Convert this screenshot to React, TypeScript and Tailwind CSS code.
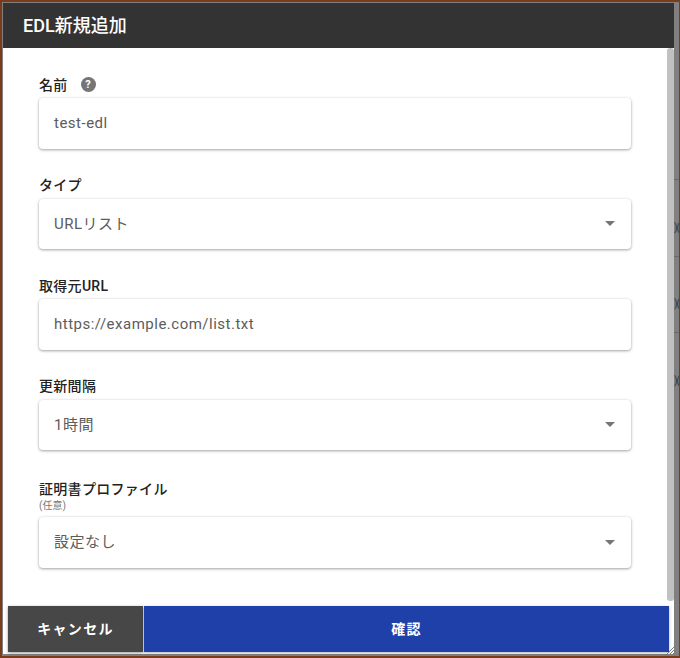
const FONT = "font-['Roboto','Noto_Sans_CJK_JP',sans-serif]";

function Box({ value, select }: { value: string; select?: boolean }) {
	return (
		<div className="flex h-[50.5px] items-center justify-between rounded bg-white pl-[15px] pr-[16px] text-[15px] tracking-[0.5px] text-[#5c5c5c] shadow-[0_1px_3px_rgba(0,0,0,0.35),0_0_3px_rgba(0,0,0,0.06)]">
			<span>{value}</span>
			{select && (
				<span className="h-0 w-0 border-x-[5px] border-t-[5px] border-x-transparent border-t-[#757575]" />
			)}
		</div>
	);
}

function Field({
	label,
	value,
	select,
	help,
	note,
}: {
	label: string;
	value: string;
	select?: boolean;
	help?: boolean;
	note?: string;
}) {
	return (
		<div className={note ? "mt-[2.5px] flex flex-col" : "flex flex-col"}>
			<div className="flex h-[21px] items-center gap-[13px] text-[14px] font-medium leading-none tracking-[0.3px] text-[#222]">
				{label}
				{help && (
					<span className="flex h-[15px] w-[15px] items-center justify-center rounded-full bg-[#757575] text-[11px] font-bold text-white">
						?
					</span>
				)}
			</div>
			{note ? (
				<div className="mb-[5.5px] text-[10px] leading-[12px] text-[#777]">{note}</div>
			) : (
				<div className="h-[3px]" />
			)}
			<Box value={value} select={select} />
		</div>
	);
}

export default function App() {
	return (
		<div className={`${FONT} relative flex h-[658px] w-[680px] flex-col overflow-hidden border-t-2 border-l-2 border-r border-b-2 border-[#7a3a1c] bg-[#808080] pt-px pl-px pr-[5px]`}>
			{/* page behind the modal, only a sliver shows on the right */}
			<div className="absolute top-[177px] right-0 h-px w-[5px] bg-[#6a6a6a]" />
			<div className="absolute top-[254px] right-0 h-px w-[5px] bg-[#6a6a6a]" />
			<div className="absolute top-[330px] right-0 h-px w-[5px] bg-[#6a6a6a]" />
			<span className="absolute top-[220px] right-0 text-[10px] leading-[12px] tracking-[-1px] text-[#333]">)(</span>
			<span className="absolute top-[296px] right-0 text-[10px] leading-[12px] tracking-[-1px] text-[#333]">)(</span>
			<span className="absolute top-[373px] right-0 text-[10px] leading-[12px] tracking-[-1px] text-[#333]">)(</span>

			<div className="relative flex h-[651px] flex-col bg-white">
				<div className="flex h-[45px] shrink-0 items-center bg-[#333333] pl-[20px] text-[18px] font-medium text-white">
					EDL新規追加
				</div>
				<div className="flex min-h-0 flex-1">
					<div className="flex min-w-0 flex-1 flex-col gap-[26px] pl-[36px] pr-[36px] pt-[26px]">
						<Field label="名前" value="test-edl" help />
						<Field label="タイプ" value="URLリスト" select />
						<Field label="取得元URL" value="https://example.com/list.txt" />
						<Field label="更新間隔" value="1時間" select />
						<Field label="証明書プロファイル" value="設定なし" select note="(任意)" />
					</div>
					<div className="mb-[5px] w-[7px] shrink-0 rounded-[3px] bg-[#c1c1c1]" />
				</div>
				<div className="mb-[2px] flex h-[46px] shrink-0 gap-px px-[5px] text-[14px] font-bold tracking-[1.3px] text-white">
					<button type="button" className="w-[135px] bg-[#474747] shadow-[0_1px_3px_rgba(0,0,0,0.4)]">
						キャンセル
					</button>
					<button type="button" className="flex-1 bg-[#1f40a8] shadow-[0_1px_3px_rgba(0,0,0,0.3)]">
						確認
					</button>
				</div>
				<svg className="absolute right-0 bottom-0" width="8" height="8" viewBox="0 0 8 8">
					<path d="M1 8 L8 1 M4 8 L8 4 M7 8 L8 7" stroke="#777" strokeWidth="1" />
				</svg>
			</div>
		</div>
	);
}
